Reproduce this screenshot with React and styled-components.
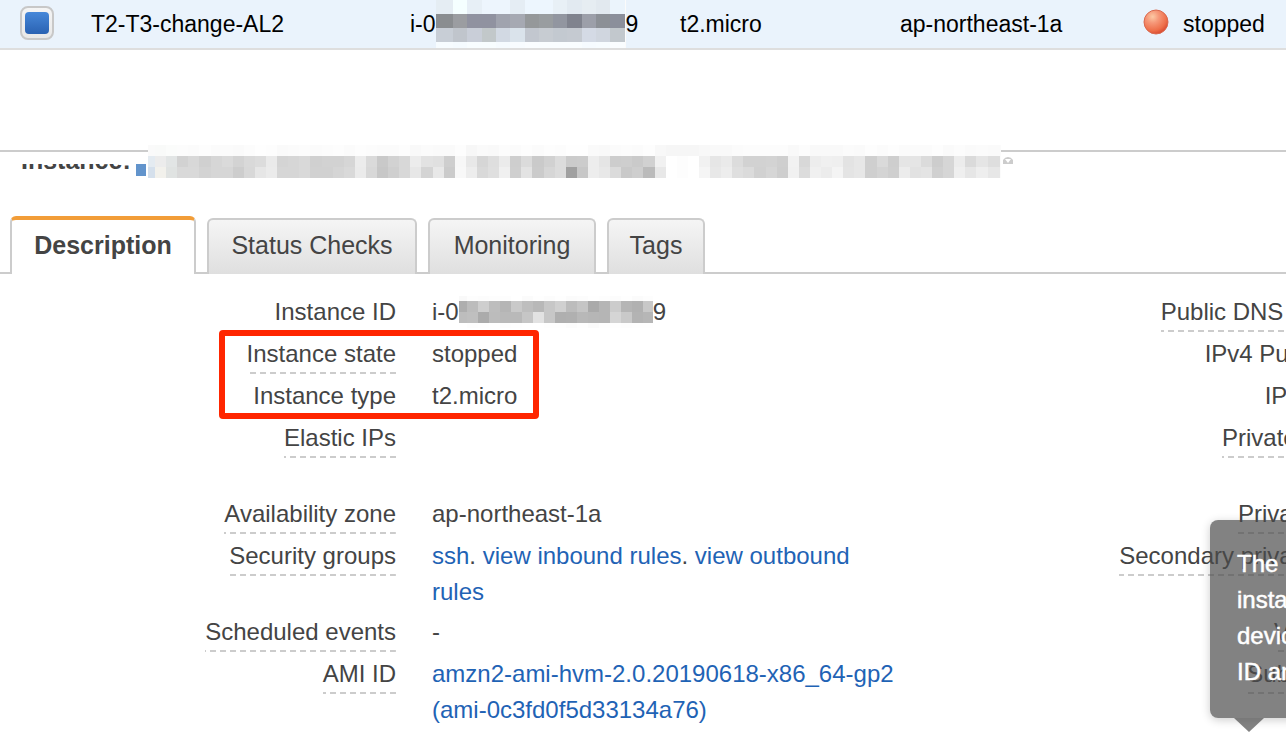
import React from 'react';
import styled, { createGlobalStyle, css } from 'styled-components';

const GlobalStyle = createGlobalStyle`
    * {
        box-sizing: border-box;
    }

    body {
        margin: 0;
        background: #fff;
        color: #444;
        font-family: "Liberation Sans", Arial, sans-serif;
        font-size: 24px;
        line-height: 36px;
    }
`

const Page = styled.main`
    height: 100vh;
    overflow: hidden;
`

const InstanceTable = styled.table`
    width: 100%;
    table-layout: fixed;
    border-collapse: separate;
    border-spacing: 0;
    background: #eaf3fc;
    color: #000;
    font-size: 23px;
`

const Column = styled.col`
    width: ${props => props.$width};
`

const Cell = styled.td`
    height: 50px;
    padding: 0 0 0 ${props => props.$indent || '10px'};
    border-bottom: 2px solid #dedede;
    line-height: 48px;
    vertical-align: top;
    white-space: nowrap;
`

const CellContent = styled.div`
    display: flex;
    align-items: center;
    height: 48px;
    gap: ${props => props.$gap || '0'};
`

const RowCheckbox = styled.input`
    appearance: none;
    display: flex;
    align-items: center;
    justify-content: center;
    width: 34px;
    height: 34px;
    margin: 0 0 2px;
    border: 2px solid #c8c8c8;
    border-radius: 8px;
    background: linear-gradient(#f5f5f5, #e8e8e8);

    &:checked::before {
        content: "";
        width: 24px;
        height: 22px;
        border-radius: 4px;
        background: linear-gradient(#4788d9, #2a62b2);
    }
`

const MosaicImage = styled.svg`
    display: block;
    flex: none;
    background: #fbfbfb;
`

const BallIcon = styled.svg`
    margin-bottom: 4px;
`

const Panel = styled.section`
    margin-top: 100px;
    border-top: 2px solid #ccc;
`

const Heading = styled.header`
    position: relative;
    height: 64px;
    padding: 12px 21px 0;
`

/* the heading is scrolled half out of this box */
const HeadingScroller = styled.div`
    display: flex;
    align-items: flex-end;
    gap: 5px;
    height: 12px;
    overflow: hidden;
`

const Title = styled.h1`
    height: 34px;
    margin: 0;
    font-size: 25px;
    line-height: 36px;
`

const StateSquare = styled.span`
    width: 10px;
    height: 12px;
    background: #6294cc;
`

const HeadingMosaic = styled.div`
    position: absolute;
    top: -7px;
    left: 148px;
    display: flex;
    gap: 2px;
`

const ArrowIcon = styled.svg`
    margin-top: 12px;
`

const TabBar = styled.nav`
    display: flex;
    align-items: flex-end;
    gap: 11px;
    height: 58px;
    padding-left: 10px;
    box-shadow: inset 0 -2px #ccc;
`

const Tab = styled.button`
    width: ${props => props.$width};
    height: 56px;
    padding: 0 0 4px;
    border: 2px solid #ccc;
    border-bottom: 0;
    border-radius: 6px 6px 0 0;
    background: linear-gradient(#f5f5f5, #dfdfdf);
    color: #444;
    font: 25px/50px "Liberation Sans", Arial, sans-serif;

    ${props => props.$active && css`
        height: 58px;
        border-top: 4px solid #f29d38;
        background: #fff;
        font-weight: bold;
    `}
`

const Details = styled.div`
    position: relative;
    padding-top: 20px;
`

/* wider than the window: the second pair of columns runs off its right edge */
const DetailList = styled.dl`
    display: grid;
    grid-template-columns: 396px 1fr 396px 1fr;
    width: 149%;
    margin: 0;
`

const Term = styled.dt`
    padding-bottom: 4px;
    text-align: right;
    white-space: nowrap;
`

const TermText = styled.span`
    display: inline-block;
    height: 38px;
    vertical-align: top;
    background: ${props => props.$dashed
        ? 'repeating-linear-gradient(to left, #ccc 0 6px, transparent 6px 10px) bottom / 100% 2px no-repeat'
        : 'none'};
`

const Value = styled.dd`
    min-height: ${props => props.$lines === 2 ? '76px' : '40px'};
    margin: 0;
    padding: 0 60px 4px 36px;
`

const MaskedId = styled.div`
    display: flex;
    align-items: center;
    height: 36px;
`

const Link = styled.a`
    color: #1f63b5;
    text-decoration: none;
`

const Highlight = styled.div`
    position: absolute;
    top: 56px;
    left: 219px;
    width: 320px;
    height: 89px;
    border: 6px solid #ff2600;
    border-radius: 4px;
`

const Tooltip = styled.div`
    position: absolute;
    top: 246px;
    left: 1210px;
    width: 400px;
    height: 198px;
    padding: 26px 27px;
    border-radius: 8px;
    background: rgba(74, 74, 74, 0.69);
    box-shadow: 0 2px 10px rgba(0, 0, 0, 0.2);
    color: #fff;
    -webkit-text-stroke: 0.5px #fff;
    white-space: nowrap;

    &::after {
        content: "";
        position: absolute;
        top: 100%;
        left: 24px;
        border: 15px solid transparent;
        border-top: 14px solid rgba(74, 74, 74, 0.69);
        border-bottom: 0;
    }
`

const TooltipLine = styled.div`
    height: 36px;
`

const ROW_MOSAIC = [
    { y: 0, h: 14, colors: 'e5edf3 f5ffff e7eff6 edf5fd edf5fd e5edf4 edf6fe edf6fe e8f0f6 e2eaf1 e6edf2 e2e9ef ebf4fc' },
    { y: 14, h: 14, colors: '8a8d90 9b9da1 9092a0 9092a0 a0a3ae a6a9b2 95989a 999da0 9296a0 80838e 9c9fa9 8c9096 8b8f9b' },
    { y: 28, h: 14, colors: 'c8ced6 c0c5cc c9ced8 c2c8ca d2d9e3 dae3eb c2c7cf c7ccd2 c3c9d0 c5cad1 d4dae5 d0d6df c2c8cd' },
    { y: 42, h: 6, colors: 'f7fcff f5fbff f8fdff f8fdff f6fbff f8fcff fafdff f9fdff f9fdff f9fdff f6fbff f7fcff fafdff' }
];

const ID_MOSAIC = [
    { y: 0, h: 5, colors: 'f9 fd fc fd fd ff fb fe fc fe fb fc fe fd fc fe fb fd' },
    { y: 5, h: 11, colors: 'ae bc ce bd b5 c9 be b8 c7 d0 bc c5 aa b5 cc b5 b1 c8' },
    { y: 16, h: 11, colors: 'bd bf ab bc b9 b9 c6 e2 c7 af b0 b8 b6 b5 d5 c9 b3 b6' },
    { y: 27, h: 5, colors: 'ff fd fe ff fd fe ff ff fe fe fc fe fb fe fe fd fe fe' }
];

const HEADING_MOSAIC = [
    { y: 0, h: 11, colors: 'fafafa f9faf9 fbfcfb fc fb fd fb fb fa fc fe fd fa fb fc fb fc fd fb fd fc fb fb fd f9 fb fa fa fd f7 fa f9 fc fb fd fb fd fc fe fe fa f9 fb fc fb fd f8 f6 f6 f6 f8 f9 f9 fb fc fc fc fc f9 fc f9 f9 f9 fb fa fd fb fd fb fb fb fd fa fc fa fb fa' },
    { y: 11, h: 11, colors: 'e4ebf1 ececec e2e5e5 d2 d8 d0 d6 da d3 d9 dc ea d4 d6 d9 d0 d2 d2 d6 ec da c9 d2 d8 ec e2 e0 ce f7 e8 d6 de eb ce db ca d1 dc cb cc ed e5 cd ce ca d1 f1 ff fd ff f1 e6 ea dc d2 d2 d3 cf f2 d8 ed f0 ef e3 e7 cf da ce e5 e5 db cd d6 ec da e5 de' },
    { y: 22, h: 11, colors: 'd5e0ec f2f1ec e0e3e2 d9 d9 d3 d6 d6 cd d8 e6 eb d6 d6 d9 d1 d1 d5 d9 eb d8 c7 cf d8 e7 d4 e8 cb f8 ed d9 df f0 cf e3 cb d6 dc a0 c7 ed e8 db c9 ce bb e8 ff fd ff f5 e8 ed df db d1 d6 ce f1 dc f0 ec f4 e4 e7 cf d4 cf ec e2 e4 d0 d6 ef e6 ee e7' }
];

const LEFT_DETAILS = [
    { label: 'Instance ID', value: <MaskedId>i-0<Mosaic rows={ID_MOSAIC} width={194} height={32} first={8} step={11} />9</MaskedId> },
    { label: 'Instance state', dashed: true, value: 'stopped' },
    { label: 'Instance type', dashed: true, value: 't2.micro' },
    { label: 'Elastic IPs', value: '', dashed: true },
    { label: 'Availability zone', dashed: true, value: 'ap-northeast-1a' },
    {
        label: 'Security groups',
        dashed: true,
        value: <><Link href="#ssh">ssh</Link>. <Link href="#inbound">view inbound rules</Link>. <Link href="#outbound">view outbound rules</Link></>
    },
    { label: 'Scheduled events', dashed: true, value: '-' },
    { label: 'AMI ID', dashed: true, value: <Link href="#ami">amzn2-ami-hvm-2.0.20190618-x86_64-gp2 (ami-0c3fd0f5d33134a76)</Link> }
];

const RIGHT_DETAILS = [
    { label: 'Public DNS (IPv4)', dashed: true },
    { label: 'IPv4 Public IP' },
    { label: 'IPv6 IPs' },
    { label: 'Private DNS', dashed: true, lines: 2 },
    { label: 'Private IPs', dashed: true },
    { label: 'Secondary private IPs', dashed: true },
    { label: 'VPC ID', dashed: true },
    { label: 'Subnet ID', dashed: true }
];

const TABS = [
    { name: 'Description', width: '186px', active: true },
    { name: 'Status Checks', width: '210px' },
    { name: 'Monitoring', width: '168px' },
    { name: 'Tags', width: '98px' }
];

function toColor(value) {
    return value.length === 2 ? `#${value}${value}${value}` : `#${value}`;
}

// pixelated strip that hides an identifier
function Mosaic({ rows, width, height, first, step }) {
    return (
        <MosaicImage width={width} height={height} shapeRendering="crispEdges" aria-hidden="true">
            {rows.map(row => row.colors.split(' ').map((color, i) => (
                <rect
                    key={`${row.y}-${i}`}
                    x={i === 0 ? 0 : Math.round(first + (i - 1) * step)}
                    y={row.y}
                    width={i === 0 ? first : Math.ceil(step)}
                    height={row.h}
                    fill={toColor(color)}
                />
            )))}
        </MosaicImage>
    );
}

function StoppedIcon() {
    return (
        <BallIcon width="26" height="26" viewBox="0 0 26 26" aria-hidden="true">
            <defs>
                <radialGradient id="ball" cx="0.36" cy="0.28" r="0.72">
                    <stop offset="0" stopColor="#fcc9a4" />
                    <stop offset="0.35" stopColor="#f6997a" />
                    <stop offset="0.8" stopColor="#ee6f4a" />
                    <stop offset="1" stopColor="#dc5034" />
                </radialGradient>
            </defs>
            <circle cx="13" cy="13" r="12" fill="url(#ball)" stroke="#d9694f" strokeWidth="1" />
        </BallIcon>
    );
}

function InstanceRow() {
    return (
        <InstanceTable>
            <colgroup>
                <Column $width="81px" />
                <Column $width="319px" />
                <Column $width="270px" />
                <Column $width="220px" />
                <Column $width="243px" />
                <Column />
            </colgroup>
            <tbody>
                <tr>
                    <Cell $indent="20px">
                        <CellContent>
                            <RowCheckbox type="checkbox" defaultChecked aria-label="Select T2-T3-change-AL2" />
                        </CellContent>
                    </Cell>
                    <Cell>T2-T3-change-AL2</Cell>
                    <Cell>
                        <CellContent>
                            i-0<Mosaic rows={ROW_MOSAIC} width={190} height={48} first={17} step={14.3} />9
                        </CellContent>
                    </Cell>
                    <Cell>t2.micro</Cell>
                    <Cell>ap-northeast-1a</Cell>
                    <Cell>
                        <CellContent $gap="14px"><StoppedIcon />stopped</CellContent>
                    </Cell>
                </tr>
            </tbody>
        </InstanceTable>
    );
}

function DetailPair({ label, dashed, value, lines }) {
    return (
        <>
            <Term><TermText $dashed={dashed}>{label}</TermText></Term>
            <Value $lines={lines}>{value}</Value>
        </>
    );
}

export default function App() {
    return (
        <Page>
            <GlobalStyle />
            <InstanceRow />
            <Panel>
                <Heading>
                    <HeadingScroller>
                        <Title>Instance:</Title>
                        <StateSquare />
                    </HeadingScroller>
                    <HeadingMosaic>
                        <Mosaic rows={HEADING_MOSAIC} width={853} height={33} first={7} step={11.1} />
                        <ArrowIcon width="10" height="7" viewBox="0 0 10 7" aria-hidden="true">
                            <path d="M0 7V3Q2 0 5 0T10 3V7Z" fill="#ccc" />
                            <path d="M2 2H8L5 6Z" fill="#fff" />
                        </ArrowIcon>
                    </HeadingMosaic>
                </Heading>
                <TabBar>
                    {TABS.map(tab => (
                        <Tab key={tab.name} type="button" $width={tab.width} $active={tab.active}>{tab.name}</Tab>
                    ))}
                </TabBar>
                <Details>
                    <DetailList>
                        {LEFT_DETAILS.map((detail, i) => (
                            <React.Fragment key={detail.label}>
                                <DetailPair {...detail} />
                                <DetailPair {...RIGHT_DETAILS[i]} />
                            </React.Fragment>
                        ))}
                    </DetailList>
                    <Highlight />
                    <Tooltip role="tooltip">
                        <TooltipLine>The</TooltipLine>
                        <TooltipLine>instance</TooltipLine>
                        <TooltipLine>device</TooltipLine>
                        <TooltipLine>ID and</TooltipLine>
                    </Tooltip>
                </Details>
            </Panel>
        </Page>
    );
}
